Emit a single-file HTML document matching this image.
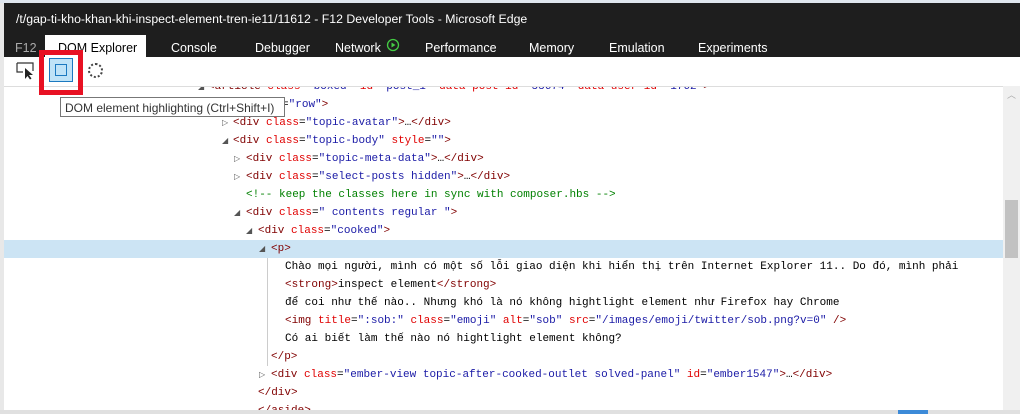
<!DOCTYPE html>
<html><head><meta charset="utf-8"><style>
body{margin:0;width:1020px;height:414px;overflow:hidden;background:#e8e8e8;position:relative;font-family:"Liberation Sans",sans-serif}
.a{position:absolute}
#title{left:4px;top:3px;width:1016px;height:54px;background:#1e1e1e}
.tt{color:#fff;font-size:12.3px;white-space:nowrap}
.tab{color:#fff;font-size:12.5px;top:38px}
#code{left:4px;top:86px;width:999px;height:324px;background:#fff;overflow:hidden;border-top:1px solid #ddd}
.l{position:absolute;font-family:"Liberation Mono",monospace;font-size:11px;white-space:pre;height:18px;line-height:18px;color:#000}
.t{color:#800000}.n{color:#e00000}.v{color:#1a1aa6}.c{color:#008000}
.tri{position:absolute;font-size:8px;color:#555;line-height:18px;font-family:"DejaVu Sans",sans-serif}
</style></head><body>
<div class="a" style="left:0;top:0;width:1020px;height:3px;background:#dfe6ee"></div>
<div class="a" id="title">
 <div class="a tt" style="left:12px;top:9px">/t/gap-ti-kho-khan-khi-inspect-element-tren-ie11/11612 - F12 Developer Tools - Microsoft Edge</div>
 <div class="a tab" style="left:11px;color:#aaa">F12</div>
 <div class="a" style="left:41px;top:32px;width:101px;height:22px;background:#fff"></div>
 <div class="a tab" style="left:54px;color:#000">DOM Explorer</div>
 <div class="a tab" style="left:167px">Console</div>
 <div class="a tab" style="left:251px">Debugger</div>
 <div class="a tab" style="left:331px">Network</div>
 <svg class="a" style="left:382px;top:35px" width="14" height="14"><circle cx="7" cy="7" r="5.5" fill="none" stroke="#4c4" stroke-width="1.3"/><path d="M5.5 4.5L9.5 7L5.5 9.5Z" fill="#4c4"/></svg>
 <div class="a tab" style="left:421px">Performance</div>
 <div class="a tab" style="left:525px">Memory</div>
 <div class="a tab" style="left:605px">Emulation</div>
 <div class="a tab" style="left:694px">Experiments</div>
</div>
<div class="a" style="left:4px;top:57px;width:1016px;height:29px;background:#fff"></div>
<svg class="a" style="left:16px;top:62px" width="20" height="18"><path d="M1 1H17V9" fill="none" stroke="#333" stroke-width="1.2"/><path d="M1 1V10H7" fill="none" stroke="#333" stroke-width="1.2"/><path d="M9 6L9 17L11.5 14L14 17.5L15.5 16.5L13 13L17 13Z" fill="#222"/></svg>
<div class="a" style="left:49px;top:58px;width:22px;height:22px;border:1px solid #1b79c0;background:#bfe3f7"></div>
<div class="a" style="left:55px;top:64px;width:10px;height:10px;border:1px solid #1b79c0"></div>
<div class="a" style="left:88px;top:63px;width:11px;height:11px;border:2px dotted #444;border-radius:50%"></div>
<div class="a" id="code">
 <div class="a" style="left:0;top:153px;width:999px;height:18px;background:#cce4f4"></div>
 <div class="a" style="left:263px;top:171px;width:1px;height:108px;background:#ccc"></div>
 <div class="tri" style="left:194px;top:-9px">◢</div>
 <div class="l" style="left:204px;top:-9px"><span class="t">&lt;article</span> <span class="n">class</span>=<span class="v">"boxed"</span> <span class="n">id</span>=<span class="v">"post_1"</span> <span class="n">data-post-id</span>=<span class="v">"55674"</span> <span class="n">data-user-id</span>=<span class="v">"1762"</span><span class="t">&gt;</span></div>
 <div class="l" style="left:212px;top:9px"><span class="t">&lt;div</span> <span class="n">class</span>=<span class="v">"row"</span><span class="t">&gt;</span></div>
 <div class="tri" style="left:218px;top:27px">▷</div>
 <div class="l" style="left:229px;top:27px"><span class="t">&lt;div</span> <span class="n">class</span>=<span class="v">"topic-avatar"</span><span class="t">&gt;</span>…<span class="t">&lt;/div&gt;</span></div>
 <div class="tri" style="left:218px;top:45px">◢</div>
 <div class="l" style="left:229px;top:45px"><span class="t">&lt;div</span> <span class="n">class</span>=<span class="v">"topic-body"</span> <span class="n">style</span>=<span class="v">""</span><span class="t">&gt;</span></div>
 <div class="tri" style="left:230px;top:63px">▷</div>
 <div class="l" style="left:242px;top:63px"><span class="t">&lt;div</span> <span class="n">class</span>=<span class="v">"topic-meta-data"</span><span class="t">&gt;</span>…<span class="t">&lt;/div&gt;</span></div>
 <div class="tri" style="left:230px;top:81px">▷</div>
 <div class="l" style="left:242px;top:81px"><span class="t">&lt;div</span> <span class="n">class</span>=<span class="v">"select-posts hidden"</span><span class="t">&gt;</span>…<span class="t">&lt;/div&gt;</span></div>
 <div class="l c" style="left:242px;top:99px">&lt;!-- keep the classes here in sync with composer.hbs --&gt;</div>
 <div class="tri" style="left:230px;top:117px">◢</div>
 <div class="l" style="left:242px;top:117px"><span class="t">&lt;div</span> <span class="n">class</span>=<span class="v">" contents regular "</span><span class="t">&gt;</span></div>
 <div class="tri" style="left:242px;top:135px">◢</div>
 <div class="l" style="left:254px;top:135px"><span class="t">&lt;div</span> <span class="n">class</span>=<span class="v">"cooked"</span><span class="t">&gt;</span></div>
 <div class="tri" style="left:255px;top:153px">◢</div>
 <div class="l" style="left:267px;top:153px"><span class="t">&lt;p&gt;</span></div>
 <div class="l" style="left:281px;top:171px">Chào mọi người, mình có một số lỗi giao diện khi hiển thị trên Internet Explorer 11.. Do đó, mình phải</div>
 <div class="l" style="left:281px;top:189px"><span class="t">&lt;strong&gt;</span>inspect element<span class="t">&lt;/strong&gt;</span></div>
 <div class="l" style="left:281px;top:207px">để coi như thế nào.. Nhưng khó là nó không hightlight element như Firefox hay Chrome</div>
 <div class="l" style="left:281px;top:225px"><span class="t">&lt;img</span> <span class="n">title</span>=<span class="v">":sob:"</span> <span class="n">class</span>=<span class="v">"emoji"</span> <span class="n">alt</span>=<span class="v">"sob"</span> <span class="n">src</span>=<span class="v">"/images/emoji/twitter/sob.png?v=0"</span> <span class="t">/&gt;</span></div>
 <div class="l" style="left:281px;top:243px">Có ai biết làm thế nào nó hightlight element không?</div>
 <div class="l" style="left:267px;top:261px"><span class="t">&lt;/p&gt;</span></div>
 <div class="tri" style="left:255px;top:279px">▷</div>
 <div class="l" style="left:267px;top:279px"><span class="t">&lt;div</span> <span class="n">class</span>=<span class="v">"ember-view topic-after-cooked-outlet solved-panel"</span> <span class="n">id</span>=<span class="v">"ember1547"</span><span class="t">&gt;</span>…<span class="t">&lt;/div&gt;</span></div>
 <div class="l" style="left:254px;top:297px"><span class="t">&lt;/div&gt;</span></div>
 <div class="l" style="left:254px;top:315px"><span class="t">&lt;/aside&gt;</span></div>
</div>
<div class="a" style="left:39px;top:50px;width:44px;height:45px;border:5px solid #e81123;box-sizing:border-box;z-index:5"></div>
<div class="a" style="left:1003px;top:86px;width:17px;height:324px;background:#f0f0f0"></div>
<div class="a" style="left:1005px;top:200px;width:13px;height:58px;background:#c2c2c2"></div>
<div class="a" style="left:1007px;top:88px;font-size:9px;color:#aaa">︿</div>
<div class="a" style="left:0;top:410px;width:1020px;height:4px;background:#e0e0e0"></div>
<div class="a" style="left:898px;top:410px;width:30px;height:4px;background:#3c8ad8"></div>
<div class="a" style="left:60px;top:97px;height:20px;background:#fff;border:1px solid #777;font-size:12px;line-height:20px;padding-left:4px;color:#333;white-space:nowrap;box-sizing:border-box;width:225px;z-index:6">DOM element highlighting (Ctrl+Shift+I)</div>
</body></html>
